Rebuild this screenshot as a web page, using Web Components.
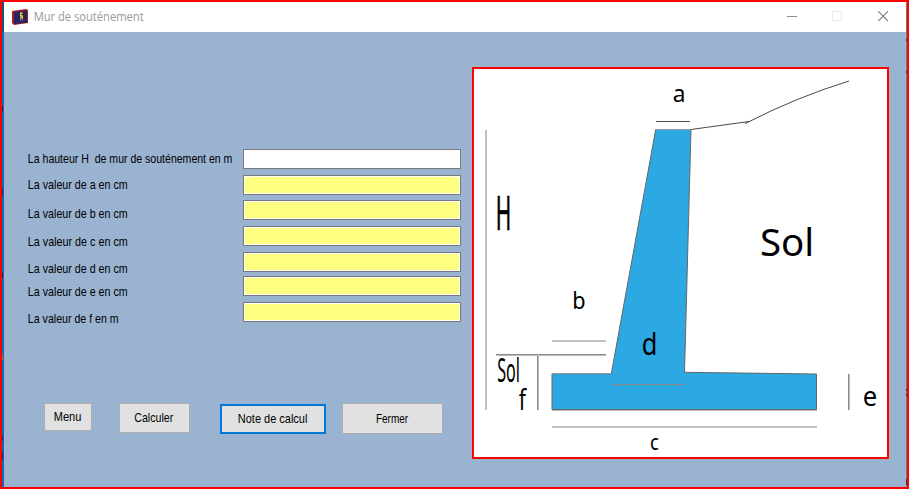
<!DOCTYPE html>
<html lang="fr"><head><meta charset="utf-8"><title>Mur de souténement</title>
<style>html,body{margin:0;width:909px;height:489px;overflow:hidden;font-family:"Liberation Sans",Arial,sans-serif}</style></head>
<body>
<app-window>
  <title-bar slot="title"></title-bar>
  <wall-form></wall-form>
  <wall-diagram></wall-diagram>
</app-window>
<script>
const ctx = document.createElement('canvas').getContext('2d');
// Scales a text so that its ink fills the given width (and height, if given).
function fit(t, text, font, size, x, base, w, top) {
  const k = 400 / size;
  ctx.font = '400px ' + font;
  const m = ctx.measureText(text);
  const left = m.actualBoundingBoxLeft / k, right = m.actualBoundingBoxRight / k;
  const sx = w / (right + left);
  const sy = top == null ? 1 : (base - top) / (m.actualBoundingBoxAscent / k);
  t.textContent = text;
  t.setAttribute('font-family', font.replace(/"/g, "'"));
  t.setAttribute('font-size', size);
  t.setAttribute('xml:space', 'preserve');
  t.style.whiteSpace = 'pre';
  t.setAttribute('transform', `translate(${x + left * sx} ${base}) scale(${sx} ${sy})`);
}
function define(name, html, setup) {
  customElements.define(name, class extends HTMLElement {
    constructor() { super(); this.attachShadow({mode: 'open'}).innerHTML = html; }
    connectedCallback() { if (setup) setup(this, this.shadowRoot); }
  });
}
define('ui-text', `<style>:host{display:block}svg{display:block;overflow:visible}</style><svg height="14"><text></text></svg>`, (el, r) => {
  const w = +el.getAttribute('w');
  r.querySelector('svg').setAttribute('width', w);
  r.querySelector('text').setAttribute('fill', el.getAttribute('color') || '#000');
  fit(r.querySelector('text'), el.getAttribute('text'), el.getAttribute('font') || '"Liberation Sans", sans-serif', +(el.getAttribute('size') || 12.2), 0.7, 11, w);
});
define('app-window', `<style>
:host{display:flex;flex-direction:column;box-sizing:border-box;width:909px;height:489px;border:2px solid #f00;background:#99b3d1;position:relative}
main{display:flex;flex:1;min-height:0;border-left:2px solid #0b70b3;border-right:1px solid #6f7f92}
i{position:absolute;left:0;width:1px;height:6px;background:#24303b}
i.r{left:904px;width:1px;height:2px;background:#30343c}
</style><slot name="title"></slot><main><slot></slot></main>
<i style="top:104px"></i><i style="top:187px"></i><i style="top:270px"></i><i style="top:352px;background:#a06a3c"></i><i style="top:433px"></i><i style="top:449px;height:9px"></i>
<i class="r" style="top:37px"></i><i class="r" style="top:69px"></i><i class="r" style="top:387px"></i><i class="r" style="top:392px"></i><i class="r" style="top:477px;height:6px"></i>`);
define('title-bar', `<style>
:host{display:flex;box-sizing:border-box;height:30px;background:#fff;border-left:2px solid #0a5a80;border-right:1px solid #777;padding:0 17px 0 8px;align-items:center}
.i{width:16px;height:16px;margin-right:5px}.s{flex:1}.c{width:102px;height:11px;margin-top:-1px}
ui-text{margin-top:-1px}
</style>
<svg class="i" viewBox="0 0 16 16"><path d="M0 2 14 0 16 1V14L2 16 0 14Z" fill="#a51b24"/><path d="M2 3 15 1.5V13.5L2 15Z" fill="#282464"/><path d="M10.8 4.2H8.7V7H10.3V9.2H8" fill="none" stroke="#f4d428" stroke-width="1.3"/><path d="M8 11h1m1 0h1" stroke="#8882aa" stroke-width="1.5"/></svg>
<ui-text text="Mur de souténement" w="109" size="12" color="#999" font='"Open Sans", sans-serif' style="margin-left:.6px"></ui-text><span class="s"></span>
<svg class="c" viewBox="0 0 102 11"><path d="M0 5.5H10" stroke="#8c8c8c"/><path d="M45.5 .5h9v9h-9z" stroke="#e6e6e6" fill="none"/><path d="M91.3 .3 101 10M101 .3 91.3 10" stroke="#858585" stroke-width="1.1"/></svg>`);
define('form-row', `<style>
:host{display:flex;width:433px;height:20px}
.l{width:215px}.b{box-sizing:border-box;width:218px;height:20px;border:1px solid #7a7a7a;padding:1px;background:#fff}
.f{height:16px;background:var(--field,#ffff80)}
</style><div class="l"><ui-text></ui-text></div><div class="b"><div class="f"></div></div>`, (el, r) => {
  r.querySelector('.l').style.paddingTop = el.getAttribute('drop') + 'px';
});
define('push-button', `<style>
:host{display:flex;box-sizing:border-box;background:#e1e1e1;border:1px solid #adadad;align-items:flex-start}
:host([default]){border:2px solid #0078d7}</style><slot></slot>`);
define('wall-form', `<style>
:host{display:block;width:468px}
.rows{padding:117px 0 0 24px}.btns{display:flex;align-items:flex-start;padding:81px 0 0 40px}
</style><div class="rows"></div><div class="btns">
<push-button style="width:48px;height:28px;padding:6px 0 0 9px"><ui-text text="Menu" w="26"></ui-text></push-button>
<push-button style="width:71px;height:30px;margin-left:27px;padding:7px 0 0 14px"><ui-text text="Calculer" w="38.5"></ui-text></push-button>
<push-button default style="width:106px;height:30px;margin:1px 0 0 30px;padding:6px 0 0 16px"><ui-text text="Note de calcul" w="68"></ui-text></push-button>
<push-button style="width:101px;height:31px;margin-left:16px;padding:8px 0 0 33px"><ui-text text="Fermer" w="31.5"></ui-text></push-button>
</div>`, (el, r) => {
  const rows = [['La hauteur H  de mur de souténement en m',203.5,0,3],['La valeur de a en cm',98.5,6,3],['La valeur de b en cm',98.5,5,7],['La valeur de c en cm',98.5,6,9],['La valeur de d en cm',98.5,6,10],['La valeur de e en cm',98.5,4,9],['La valeur de f en m',89.5,6,10]];
  rows.forEach(([text, w, gap, drop], i) => {
    const row = document.createElement('form-row');
    row.setAttribute('drop', drop);
    row.style.marginTop = gap + 'px';
    if (!i) row.style.setProperty('--field', '#fff');
    const t = row.shadowRoot.querySelector('ui-text');
    t.setAttribute('text', text); t.setAttribute('w', w);
    r.querySelector('.rows').append(row);
  });
});
define('wall-diagram', `<style>
:host{display:block;box-sizing:border-box;width:417px;height:392px;margin-top:35px;border:2px solid #f00;background:#fff}svg{display:block}
</style><svg width="413" height="388" viewBox="474 69 413 388" fill="none">
<path d="M655.7 129.5H691L684.5 372.3 816.5 374V409.5H552V373.7H611.3Z" fill="#2ca8e2" stroke="#666"/>
<path d="M656 129.5H691M552 373.5H611" stroke="#999"/>
<path d="M656 121.5H690M691 129.5 749 121.5M745 123.6Q797 97 849 81" stroke="#4a4a4a"/>
<path d="M486 130V410M552 341H606M552 427H817" stroke="#c0c0c0" stroke-width="2"/>
<path d="M496 354.5H606M537.5 355V410M848.5 374V410" stroke="#8c8c8c"/>
<path d="M496 355.5H606M538.5 356V410M849.5 374V410M552 410.5H817" stroke="#bcbcbc"/>
<path d="M612 384.5H685" stroke="#8a8584"/><g fill="#000"></g></svg>`, (el, r) => {
  const g = r.querySelector('g');
  [['a',673.5,102,10.3,89.3],['H',497.6,230,11.8,196.3],['Sol',761.7,256,49.8,227],['b',574,309,10.5,291],['d',643,355,12.3,332],['Sol',498,382.3,20.8,357],['f',518.8,410,8.2,388],['c',650.8,450,7.5,438],['e',864,406,12,391]].forEach(([s,x,b,w,top]) => {
    const t = document.createElementNS('http://www.w3.org/2000/svg', 'text');
    fit(t, s, '"Noto Sans", sans-serif', 40, x, b, w, top);
    if (s === 'H') { t.setAttribute('stroke', '#000'); t.setAttribute('stroke-width', '.6'); }
    g.append(t);
  });
});
</script>
</body></html>
